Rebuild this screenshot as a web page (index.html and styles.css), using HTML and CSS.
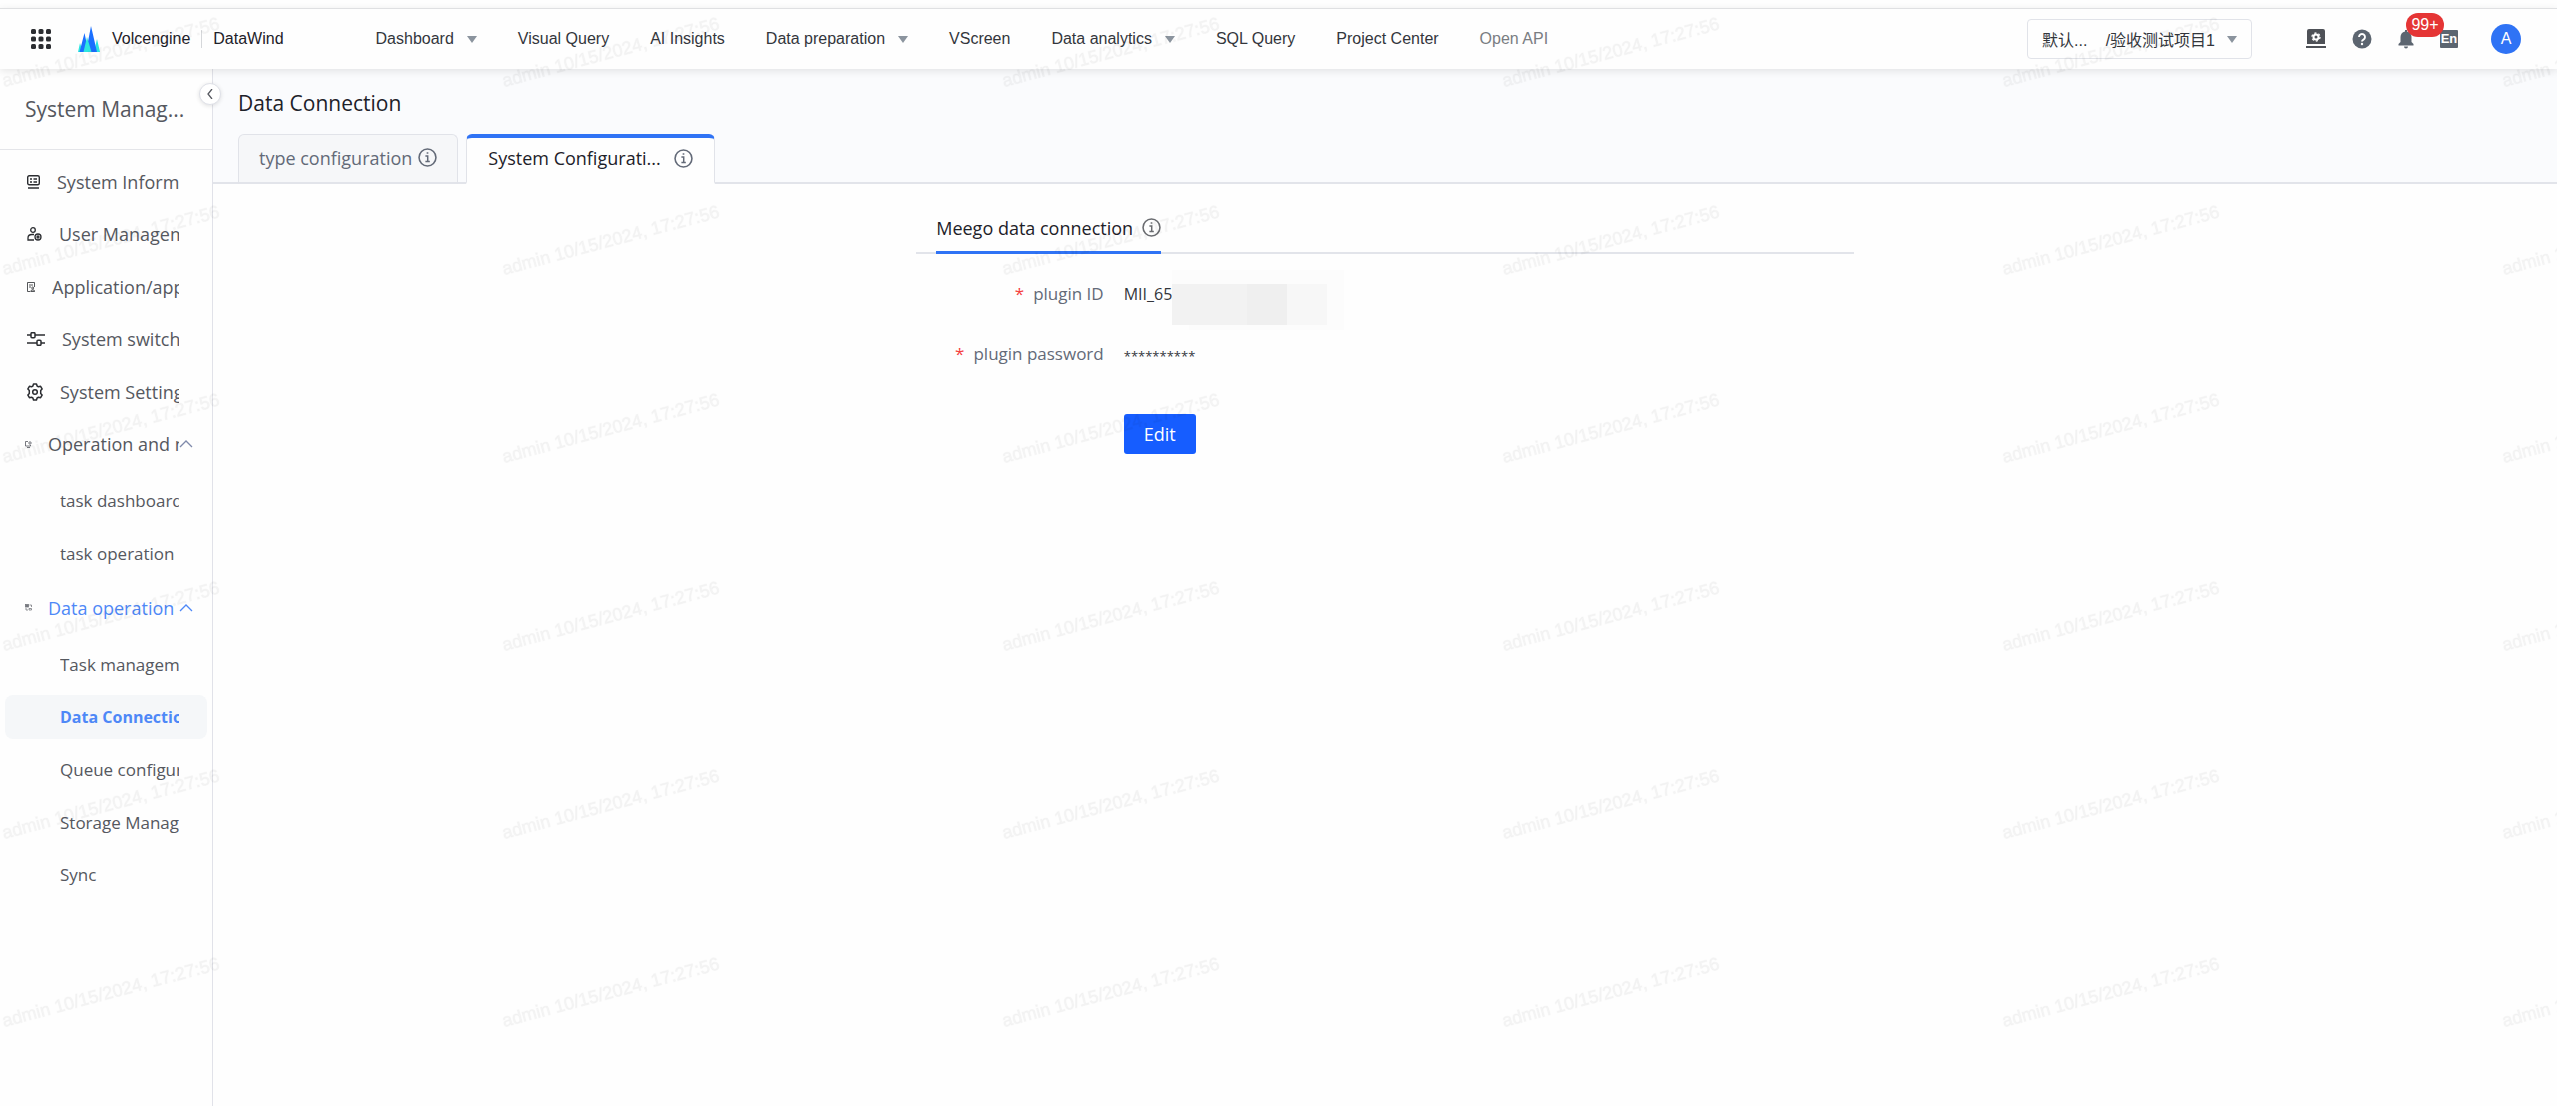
FILE: index.html
```html
<!DOCTYPE html>
<html lang="en">
<head>
<meta charset="utf-8">
<title>Data Connection - DataWind</title>
<link rel="stylesheet" href="styles.css">
</head>
<body>
<svg class="sprite" aria-hidden="true">
  <symbol id="info" viewBox="0 0 18 18">
    <circle cx="9" cy="9" r="8" fill="none" stroke="currentColor" stroke-width="1.5"/>
    <path d="M7 7.5h2.2v5M7 12.7h4.2M8.2 4.8h1.6" fill="none" stroke="currentColor" stroke-width="1.4"/>
  </symbol>
  <symbol id="caret" viewBox="0 0 10 8"><path d="M0 1h10L5 8z" fill="currentColor"/></symbol>
  <symbol id="up" viewBox="0 0 14 8"><path d="M1 7l6-6 6 6" fill="none" stroke="currentColor" stroke-width="1.3"/></symbol>
</svg>

<header class="topbar">
  <button class="icon-btn apps" aria-label="Applications">
    <svg width="20" height="20" viewBox="0 0 20 20" fill="#2b2d31"><rect width="5" height="5" rx="1.500"/><rect x="7.500" width="5" height="5" rx="1.500"/><rect x="15" width="5" height="5" rx="1.500"/><rect y="7.500" width="5" height="5" rx="1.500"/><rect x="7.500" y="7.500" width="5" height="5" rx="1.500"/><rect x="15" y="7.500" width="5" height="5" rx="1.500"/><rect y="15" width="5" height="5" rx="1.500"/><rect x="7.500" y="15" width="5" height="5" rx="1.500"/><rect x="15" y="15" width="5" height="5" rx="1.500"/></svg>
  </button>
  <a class="brand" href="#">
    <svg width="22" height="26" viewBox="0 0 22 26"><path d="M0 26l2-9 3 9zM16 26l3-13 3 13z" fill="#2ee6e0"/><path d="M1.500 26L6.500 7l4 19zM8 26l5-26 6 26z" fill="#1a70ff"/><path d="M5.500 26L9 11l4.500 15z" fill="#2ee6e0"/></svg>
    <span>Volcengine</span>
  </a>
  <span class="product">DataWind</span>
  <nav class="mainnav">
    <a href="#">Dashboard <svg class="caret"><use href="#caret"/></svg></a>
    <a href="#">Visual Query</a>
    <a href="#">AI Insights</a>
    <a href="#">Data preparation <svg class="caret"><use href="#caret"/></svg></a>
    <a href="#">VScreen</a>
    <a href="#">Data analytics <svg class="caret"><use href="#caret"/></svg></a>
    <a href="#">SQL Query</a>
    <a href="#">Project Center</a>
    <a class="muted" href="#">Open API</a>
  </nav>
  <button class="project"><span>默认...</span><span>/验收测试项目1</span><svg class="caret"><use href="#caret"/></svg></button>
  <div class="tools">
    <button class="icon-btn" aria-label="System settings">
      <svg width="20" height="20" viewBox="0 0 20 20"><path fill="#4e5157" d="M3 0h14a2 2 0 0 1 2 2v13H1V2a2 2 0 0 1 2-2zM0 17h20v2H0z"/><circle cx="10" cy="8" r="2.500" fill="none" stroke="#fff" stroke-width="2"/><circle cx="10" cy="8" r="4" fill="none" stroke="#fff" stroke-width="1.300" stroke-dasharray="2.090 2.090"/></svg>
    </button>
    <button class="icon-btn" aria-label="Help">
      <svg width="20" height="20" viewBox="0 0 20 20"><circle cx="10" cy="10" r="9.500" fill="#5c6570"/><path d="M7 8a3 3 0 1 1 4.500 2.600c-1 .6-1.500 1-1.500 2" fill="none" stroke="#fff" stroke-width="1.900"/><circle cx="10" cy="15" r="1.200" fill="#fff"/></svg>
    </button>
    <button class="icon-btn bell" aria-label="Notifications">
      <svg width="16" height="20" viewBox="0 0 16 20" fill="#5c6570"><path d="M7 1h2v1.500c3 .6 4.500 3 4.500 5.500v5l2 2v1.500H.500V15l2-2V8C2.500 5.500 4 3.100 7 2.500zM6 17.500h4a2 2 0 0 1-4 0z"/></svg>
      <span class="badge">99+</span>
    </button>
    <button class="lang" aria-label="Language">En</button>
    <button class="avatar" aria-label="Account">A</button>
  </div>
</header>

<div class="shell">
  <aside class="sidebar">
    <button class="collapse" aria-label="Collapse"><svg width="6" height="10" viewBox="0 0 6 10"><path d="M5 0L1 5l4 5" fill="none" stroke="#55585f" stroke-width="1.300"/></svg></button>
    <h2>System Manag...</h2>
    <ul class="menu">
      <li><a href="#"><svg width="13" height="14" viewBox="0 0 13 14" fill="none" stroke="#2b2d31" stroke-width="1.400"><rect x=".7" y=".7" width="11.600" height="9" rx="1.500"/><path d="M3 4h2M6.500 4H10M3 7h2M6.500 7H10M1 13h11"/></svg><span>System Information</span></a></li>
      <li><a href="#"><svg width="15" height="14" viewBox="0 0 15 14" fill="none" stroke="#2b2d31" stroke-width="1.300"><circle cx="6" cy="3" r="2.300"/><path d="M7 13H1v-2c0-2 1.500-3.500 4-3.500h2"/><circle cx="11" cy="10" r="3"/><circle cx="11" cy="10" r="1"/></svg><span>User Management</span></a></li>
      <li><a href="#"><svg width="8" height="10" viewBox="0 0 8 10" fill="none" stroke="#2b2d31" stroke-width=".8"><path d="M3 9.500H.500V.500h7V5M2 3h4M2 5h2"/><circle cx="5.700" cy="6" r="1"/><path d="M3.700 9.500h4L7 8H4.500z"/></svg><span>Application/approval</span></a></li>
      <li><a href="#"><svg width="18" height="14" viewBox="0 0 18 14" fill="none" stroke="#2b2d31" stroke-width="1.500"><path d="M0 3h4M8 3h10M0 11h10M14 11h4"/><rect x="4" y=".7" width="4" height="5" rx="1"/><rect x="10" y="8.300" width="4" height="5" rx="1"/></svg><span>System switch</span></a></li>
      <li><a href="#"><svg width="16" height="18" viewBox="0 0 16 18" fill="none" stroke="#2b2d31" stroke-width="1.500" stroke-linejoin="round"><path d="M6.500 1h3l.6 2 1.400.8 2.100-.5 1.500 2.600L13.700 7.500v3l1.400 1.600-1.500 2.600-2.100-.5-1.400.8-.6 2h-3l-.6-2-1.400-.8-2.100.5L.9 12.100l1.400-1.600v-3L.9 5.900l1.500-2.600 2.100.5L5.900 3z"/><circle cx="8" cy="9" r="2.300"/></svg><span>System Settings</span></a></li>
      <li class="group">
        <a href="#"><svg width="7" height="7" viewBox="0 0 7 7" fill="none" stroke="#55585f" stroke-width=".8"><path d="M3 .5H.500v4.500h5V4M2 6.500h3"/><circle cx="5" cy="2" r="1.200"/></svg><span>Operation and maintenance</span><svg class="up"><use href="#up"/></svg></a>
        <ul class="submenu">
          <li><a href="#"><span>task dashboard</span></a></li>
          <li><a href="#"><span>task operation analysis</span></a></li>
        </ul>
      </li>
      <li class="group">
        <a class="open" href="#"><svg width="7" height="7" viewBox="0 0 7 7" fill="none" stroke="#77797f" stroke-width=".8"><rect x=".5" y=".5" width="3" height="2.500" fill="#77797f"/><path d="M4.500 1h2v2M1 4v2h2M4 4.500h2.500V6H4z"/></svg><span>Data operation and maintenance</span><svg class="up"><use href="#up"/></svg></a>
        <ul class="submenu">
          <li><a href="#"><span>Task management</span></a></li>
          <li><a class="current" href="#" aria-current="page"><span>Data Connection</span></a></li>
          <li><a href="#"><span>Queue configuration</span></a></li>
          <li><a href="#"><span>Storage Management</span></a></li>
          <li><a href="#"><span>Sync</span></a></li>
        </ul>
      </li>
    </ul>
  </aside>

  <main class="main">
    <div class="pagehead">
      <h1>Data Connection</h1>
      <div class="tabs" role="tablist">
        <button class="tab" role="tab" aria-selected="false">type configuration <svg class="info"><use href="#info"/></svg></button>
        <button class="tab active" role="tab" aria-selected="true">System Configurati... <svg class="info"><use href="#info"/></svg></button>
      </div>
    </div>
    <section class="panel">
      <div class="subtabs" role="tablist">
        <button class="subtab" role="tab" aria-selected="true">Meego data connection <svg class="info"><use href="#info"/></svg></button>
      </div>
      <dl class="fields">
        <dt><b>*</b>plugin ID</dt>
        <dd>MII_65<span class="mask"><i></i><i></i><i></i><i></i></span></dd>
        <dt><b>*</b>plugin password</dt>
        <dd class="secret">**********</dd>
      </dl>
      <button class="edit">Edit</button>
    </section>
  </main>
</div>

<svg class="watermark" aria-hidden="true">
  <defs>
    <pattern id="wm" width="500" height="188" patternUnits="userSpaceOnUse">
      <text x="4" y="87" transform="rotate(-15 4 87)">admin 10/15/2024, 17:27:56</text>
    </pattern>
  </defs>
  <rect width="100%" height="100%" fill="url(#wm)"/>
</svg>
</body>
</html>
```
FILE: styles.css
```css
* { box-sizing: border-box; }

body {
  margin: 0;
  min-height: 100vh;
  display: flex;
  flex-direction: column;
  background: #fefefe;
  color: #1d2129;
  font-family: "Open Sans", "Noto Sans", "Noto Sans CJK SC", sans-serif;
  font-size: 16px;
}

a { color: inherit; text-decoration: none; }
button { border: 0; padding: 0; background: none; color: inherit; font: inherit; cursor: pointer; }
ul { list-style: none; margin: 0; padding: 0; }
svg { flex: none; }
.sprite { display: none; }
.caret { width: 10px; height: 8px; color: #8b949e; }
.info { width: 19px; height: 19px; }

/* Top bar */
.topbar {
  position: relative;
  z-index: 2;
  display: flex;
  align-items: center;
  height: 61px;
  margin-top: 8px;
  padding: 0 36px 0 31px;
  border-top: 1px solid #dfe0e2;
  background: #fefefe;
  box-shadow: 0 2px 8px rgba(0, 0, 0, .1);
  font-family: "Liberation Sans", "Noto Sans CJK SC", sans-serif;
  white-space: nowrap;
}
.icon-btn { display: flex; }
.brand { display: flex; align-items: center; gap: 12px; margin-left: 27px; }
.product { margin-left: 11px; padding-left: 11px; border-left: 1px solid #d5d7da; }
.mainnav { display: flex; gap: 41px; margin-left: 92px; color: #33363c; }
.mainnav a { display: flex; align-items: center; gap: 13px; }
.mainnav .muted { color: #7a7d82; }

.project {
  display: flex;
  align-items: center;
  width: 225px;
  height: 40px;
  margin-left: auto;
  padding: 0 14px;
  border: 1px solid #e1e3e9;
  border-radius: 4px;
  color: #33363c;
}
.project span + span { margin-left: auto; }
.project .caret { margin-left: 12px; }

.tools { display: flex; align-items: center; gap: 26px; margin-left: 54px; }
.bell { position: relative; }
.badge {
  position: absolute;
  left: 8px;
  top: -16px;
  width: 38px;
  height: 24px;
  border-radius: 12px;
  background: #e53535;
  color: #fff;
  line-height: 24px;
  text-align: center;
}
.lang { width: 18px; height: 18px; border-radius: 1px; background: #5c6570; color: #fff; font-size: 13px; font-weight: bold; line-height: 18px; }
.avatar { width: 30px; height: 30px; margin-left: 7px; border-radius: 50%; background: #2f73f5; color: #fff; }

.shell { display: flex; flex: 1; }

/* Sidebar */
.sidebar { position: relative; width: 213px; flex: none; border-right: 1px solid #e1e2e9; }
.sidebar h2 {
  margin: 0;
  height: 81px;
  padding-left: 25px;
  border-bottom: 1px solid #e4e5e9;
  color: #55585f;
  font-size: 21px;
  font-weight: 400;
  line-height: 80px;
}
.collapse {
  position: absolute;
  right: -9px;
  top: 14px;
  display: flex;
  align-items: center;
  justify-content: center;
  width: 22px;
  height: 22px;
  border: 1px solid #dfe1e8;
  border-radius: 50%;
  background: #fff;
  box-shadow: 0 1px 4px rgba(0, 0, 0, .12);
}
.menu { padding: 5px; color: #55585f; font-size: 18px; white-space: nowrap; }
.menu a { display: flex; align-items: center; height: 53px; padding: 0 28px 0 22px; }
.menu li:nth-child(even) > a { height: 52px; }
.menu a span { flex: 1; min-width: 0; overflow: hidden; }
.menu svg + span { margin-left: 17px; }
.menu .group > a { padding-left: 20px; }
.menu .group svg + span { margin-left: 16px; }
.menu a .up { width: 14px; height: 8px; margin-right: -14px; color: #7f8aab; }
.menu .open, .menu .open .up { color: #4e88f7; }
.submenu { padding: 4px 0 2px; font-size: 17px; }
.menu .submenu a { padding-left: 55px; }
.submenu .current { border-radius: 8px; background: #f5f7f9; color: #4e88f7; font-size: 16px; font-weight: 700; }
.menu li:nth-child(even) > .current { height: 44px; margin: 4px 0; }

/* Page head */
.main { flex: 1; min-width: 0; }
.pagehead { padding: 20px 25px 0; border-bottom: 2px solid #e2e4ea; background: #fafbfd; }
h1 { margin: 0 0 17px; font-size: 21px; font-weight: 400; line-height: 28px; }
.tabs { display: flex; gap: 8px; margin-bottom: -2px; }
.tab {
  display: flex;
  align-items: center;
  gap: 6px;
  height: 50px;
  padding: 0 20px 2px;
  border: 1px solid #e1e3e9;
  border-bottom: 2px solid #e2e4ea;
  border-radius: 6px 6px 0 0;
  background: #f6f7f9;
  color: #636a78;
  font-size: 18px;
}
.tab.active { gap: 13px; padding: 0 21px 4px; border-top: 4px solid #2f73f5; border-bottom-color: #fefefe; background: #fefefe; color: #1d2129; }
.tab .info { color: #636a78; }

/* Connection form */
.panel { width: 40%; margin: 24px auto 0; }
.subtabs { display: flex; padding-left: 20px; border-bottom: 2px solid #e2e4ea; }
.subtab { display: flex; align-items: center; gap: 9px; height: 46px; margin-bottom: -2px; padding-bottom: 4px; border-bottom: 3px solid #2f73f5; font-size: 18px; }
.subtab .info { color: #6a6c70; }
.fields { display: grid; grid-template-columns: 20% 1fr; column-gap: 20px; row-gap: 20px; margin: 20px 0 0; line-height: 40px; }
.fields dt { text-align: right; color: #636a78; font-size: 17px; }
.fields dt b { margin-right: 9px; color: #f53f3f; font-weight: 400; }
.fields dd { display: flex; height: 40px; margin: 0; color: #33363c; }
.fields .secret { padding-top: 2px; font-size: 13px; }
.mask { display: flex; height: 41px; margin-top: 10px; box-shadow: 0 -14px #fcfcfc, 17px -14px #fcfcfc, 17px 5px #fcfcfc; }
.mask i { width: 40px; background: #f2f2f2; }
.mask i:first-child { width: 35px; }
.mask i:nth-child(3) { background: #efefef; }
.mask i:nth-child(4) { background: #f7f7f7; }
.edit { display: block; width: 72px; height: 40px; margin: 40px 0 0 calc(20% + 20px); border-radius: 3px; background: #165dff; color: #fff; font-size: 18px; }

/* Watermark over the whole window */
.watermark { position: fixed; inset: 0; z-index: 5; width: 100%; height: 100%; pointer-events: none; }
.watermark text { font: 18px "Liberation Sans", sans-serif; fill: rgba(0, 0, 0, .03); stroke: rgba(0, 0, 0, .02); stroke-width: 1px; }
```
